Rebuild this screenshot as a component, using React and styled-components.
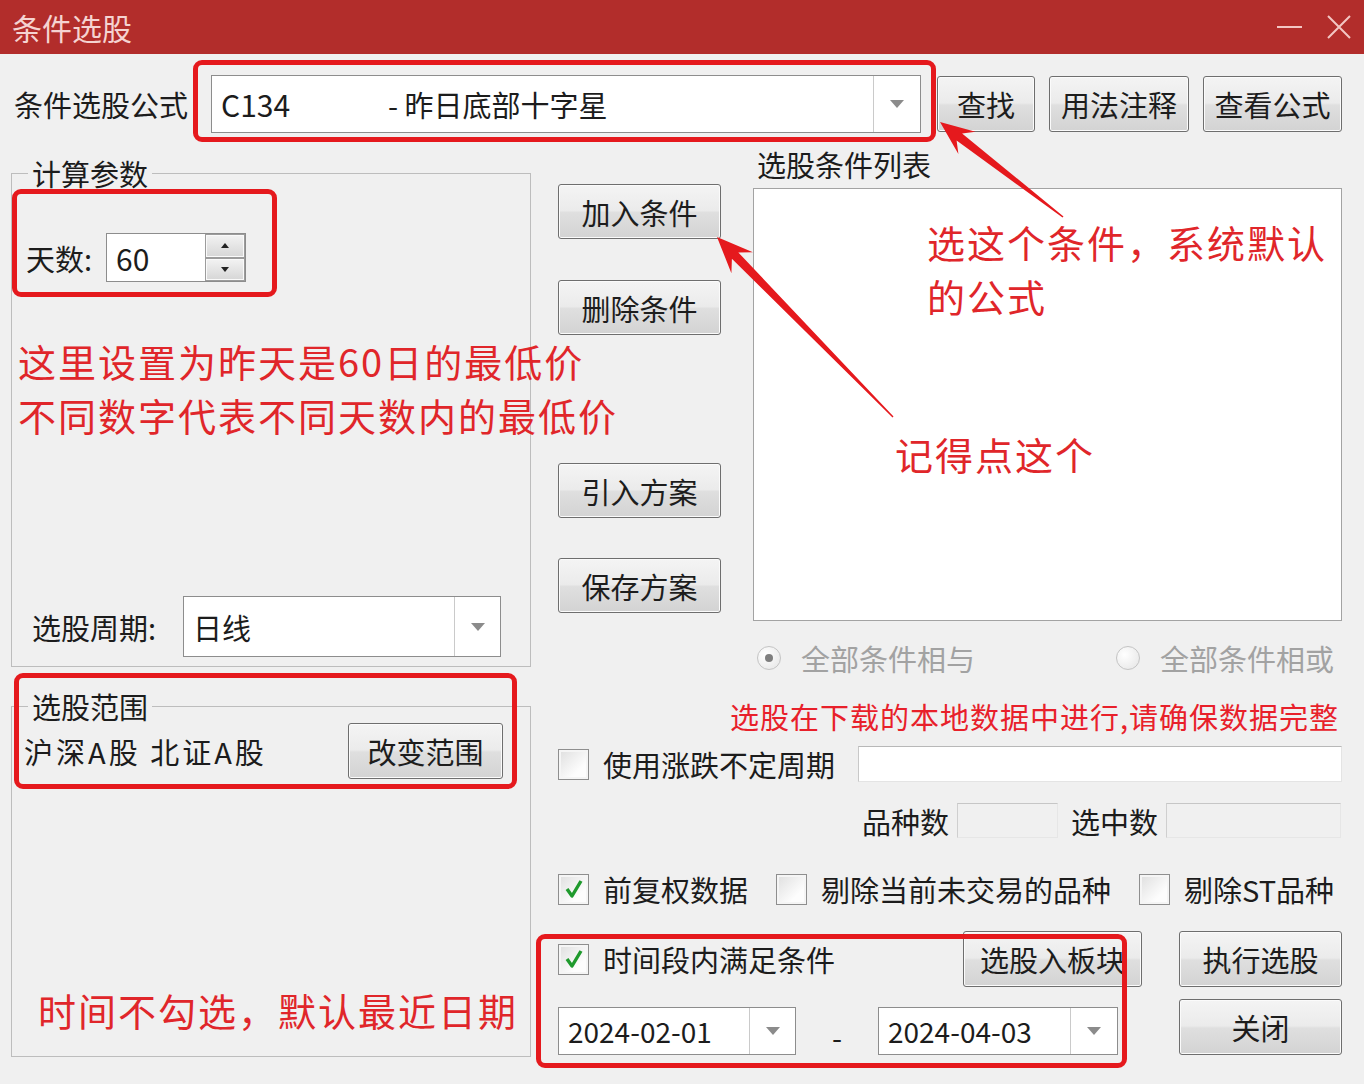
import React from "react";
import styled, { createGlobalStyle } from "styled-components";

const GlobalStyle = createGlobalStyle`
  html, body {
    margin: 0;
    padding: 0;
    background: #f0f0f0;
  }
  body {
    font-family: "Noto Sans CJK SC", "Noto Sans", sans-serif;
    color: #1c1c1c;
  }
`;

const RED = "#e5191d";
const NOTE = "#e0262a";

const Window = styled.div`
  position: relative;
  width: 1364px;
  height: 1084px;
  display: flex;
  flex-direction: column;
  background: #f0f0f0;
  overflow: hidden;
`;

const TitleBar = styled.div`
  flex: none;
  height: 54px;
  display: flex;
  align-items: center;
  padding: 0 13px 0 12px;
  background: #b22d2b;
  color: #f5d3d1;
  font-size: 30px;
  line-height: 1;
`;

const WinCtrls = styled.div`
  margin-left: auto;
  display: flex;
  align-items: center;
  gap: 25px;
`;

const Body = styled.div`
  flex: 1;
  display: flex;
  flex-direction: column;
  padding: 0 22px 0 11px;
  font-size: 29px;
  line-height: 32px;
`;

/* ---------- common controls ---------- */

const Btn = styled.div`
  box-sizing: border-box;
  flex: none;
  width: ${(p) => p.$w}px;
  height: ${(p) => p.$h || 55}px;
  margin-top: ${(p) => p.$mt || 0}px;
  display: flex;
  align-items: center;
  justify-content: center;
  border: 1px solid #6e6e6e;
  border-radius: 3px;
  background: linear-gradient(#f4f4f4, #ebebeb 48%, #dfdfdf 52%, #d3d3d3);
  box-shadow: inset 0 0 0 1px #fbfbfb;
  color: #1d1d1d;
  white-space: nowrap;
  overflow: hidden;
`;

const ComboBox = styled.div`
  box-sizing: border-box;
  flex: none;
  width: ${(p) => p.$w}px;
  height: ${(p) => p.$h}px;
  display: flex;
  border: 1px solid #8d8d8d;
  background: #fff;
`;

const ComboText = styled.div`
  flex: 1;
  display: flex;
  align-items: center;
  padding-left: ${(p) => p.$pl || 9}px;
  font-size: ${(p) => p.$fs || 29}px;
  white-space: nowrap;
  overflow: hidden;
`;

const ComboDrop = styled.div`
  width: ${(p) => p.$w}px;
  flex: none;
  display: flex;
  align-items: center;
  justify-content: center;
  border-left: 1px solid #cacaca;
`;

const Caret = styled.span`
  width: 0;
  height: 0;
  border-left: 7px solid transparent;
  border-right: 7px solid transparent;
  border-top: 8px solid #8b8b8b;
`;

const Combo = ({ w, h, dropW, fs, children }) => (
  <ComboBox $w={w} $h={h}>
    <ComboText $fs={fs}>{children}</ComboText>
    <ComboDrop $w={dropW}>
      <Caret />
    </ComboDrop>
  </ComboBox>
);

const CheckBoxBox = styled.span`
  box-sizing: border-box;
  flex: none;
  width: 31px;
  height: 31px;
  display: flex;
  align-items: center;
  justify-content: center;
  border: 1px solid #8e8e8e;
  background: linear-gradient(135deg, #dedede, #fdfdfd 70%);
  box-shadow: inset 0 0 0 2px #f5f5f5;
`;

const CheckBox = ({ checked }) => (
  <CheckBoxBox>
    {checked && (
      <svg width="20" height="22" viewBox="0 0 20 22">
        <path d="M3 11 L8 18 L17 3" fill="none" stroke="#1f9a2d" strokeWidth="3.4" strokeLinejoin="round" />
      </svg>
    )}
  </CheckBoxBox>
);

const CheckItem = styled.label`
  display: flex;
  align-items: center;
  gap: 14px;
  white-space: nowrap;
`;

const RadioDot = styled.span`
  box-sizing: border-box;
  flex: none;
  width: 24px;
  height: 24px;
  border-radius: 50%;
  border: 1px solid #c4c4c4;
  background: radial-gradient(circle at 35% 35%, #ffffff, #e4e4e4);
  display: flex;
  align-items: center;
  justify-content: center;
  &::after {
    content: "";
    width: 8px;
    height: 8px;
    border-radius: 50%;
    background: ${(p) => (p.$on ? "#7e7e7e" : "transparent")};
  }
`;

const RadioItem = styled.label`
  display: flex;
  align-items: center;
  gap: 20px;
  color: #a2a2a2;
  white-space: nowrap;
`;

/* ---------- top row ---------- */

const TopRow = styled.div`
  margin-top: 21px;
  height: 58px;
  display: flex;
  align-items: center;
`;

const TopLabel = styled.div`
  width: 199px;
  padding-left: 3px;
  white-space: nowrap;
`;

const TopBtns = styled.div`
  display: flex;
  gap: 14px;
  margin-left: 16px;
`;

const CodeSpan = styled.span`
  display: inline-block;
  width: 167px;
  font-size: 30px;
`;

/* ---------- main ---------- */

const Main = styled.div`
  flex: 1;
  display: flex;
`;

const LeftCol = styled.div`
  width: 520px;
  flex: none;
  display: flex;
  flex-direction: column;
  padding-top: 24px;
`;

const Group = styled.fieldset`
  box-sizing: border-box;
  width: 520px;
  min-width: 0;
  margin: ${(p) => p.$mt || 0}px 0 0 0;
  padding: 0 13px;
  border: 1px solid #bdbdbd;
`;

const GroupInner = styled.div`
  height: ${(p) => p.$h}px;
  display: flex;
  flex-direction: column;
`;

const Legend = styled.legend`
  margin-left: 3px;
  padding: 0 4px;
  line-height: 32px;
`;

const SpinRow = styled.div`
  margin-top: 44px;
  display: flex;
  align-items: center;
`;

const FieldLabel = styled.div`
  width: ${(p) => p.$w}px;
  padding-left: ${(p) => p.$pl || 0}px;
  flex: none;
  white-space: nowrap;
`;

const Spin = styled.div`
  box-sizing: border-box;
  width: 140px;
  height: 49px;
  display: flex;
  border: 1px solid #8d8d8d;
  background: #fff;
`;

const SpinValue = styled.div`
  flex: 1;
  display: flex;
  align-items: center;
  padding-left: 9px;
  font-size: 30px;
`;

const SpinBtns = styled.div`
  width: 40px;
  display: flex;
  flex-direction: column;
`;

const SpinHalf = styled.div`
  flex: 1;
  display: flex;
  align-items: center;
  justify-content: center;
  border: 1px solid #9c9c9c;
  background: linear-gradient(#f3f3f3, #d6d6d6);
  box-shadow: inset 0 0 0 1px #fafafa;
  &::after {
    content: "";
    border-left: 4px solid transparent;
    border-right: 4px solid transparent;
    ${(p) => (p.$up ? "border-bottom: 5px solid #222;" : "border-top: 5px solid #222;")}
  }
`;

const Note = styled.div`
  margin: ${(p) => p.$m};
  font-size: 38px;
  letter-spacing: 2px;
  line-height: 54px;
  color: ${NOTE};
  white-space: nowrap;
`;

const PeriodRow = styled.div`
  margin-top: auto;
  margin-bottom: 9px;
  display: flex;
  align-items: center;
`;

const RangeRow = styled.div`
  margin-top: 1px;
  padding-right: 14px;
  display: flex;
  align-items: center;
  justify-content: space-between;
`;

const RangeText = styled.div`
  margin-left: -1px;
  letter-spacing: 3px;
  white-space: nowrap;
`;

/* ---------- right side ---------- */

const RightArea = styled.div`
  width: 784px;
  margin-left: 27px;
  flex: none;
  display: flex;
  flex-direction: column;
`;

const RightTop = styled.div`
  display: flex;
`;

const BtnCol = styled.div`
  width: 163px;
  padding-top: 51px;
  display: flex;
  flex-direction: column;
`;

const ListCol = styled.div`
  margin-left: 32px;
  width: 589px;
  display: flex;
  flex-direction: column;
`;

const ListLabel = styled.div`
  margin-top: 15px;
  padding-left: 4px;
`;

const ListBox = styled.div`
  position: relative;
  box-sizing: border-box;
  margin-top: 8px;
  height: 433px;
  border: 1px solid #a3a3a3;
  background: #fff;
`;

const ListNote = styled(Note)`
  position: absolute;
  left: ${(p) => p.$x}px;
  top: ${(p) => p.$y}px;
  margin: 0;
`;

const RadioRow = styled.div`
  margin-top: 19px;
  height: 35px;
  padding: 0 8px 0 199px;
  display: flex;
  align-items: center;
  justify-content: space-between;
`;

const Warn = styled.div`
  margin-top: 24px;
  padding-right: 3px;
  text-align: right;
  line-height: 34px;
  letter-spacing: 1px;
  color: #e8202a;
  white-space: nowrap;
`;

const CycleRow = styled.div`
  margin-top: 13px;
  height: 36px;
  display: flex;
  align-items: center;
`;

const TextInput = styled.div`
  box-sizing: border-box;
  margin-left: auto;
  width: 484px;
  height: 36px;
  background: #fff;
  border: 1px solid #e4e4e4;
  border-top-color: #b8b8b8;
  border-left-color: #c8c8c8;
`;

const CountRow = styled.div`
  margin-top: 21px;
  height: 35px;
  padding-right: 1px;
  display: flex;
  align-items: center;
  justify-content: flex-end;
`;

const CountBox = styled.div`
  box-sizing: border-box;
  width: ${(p) => p.$w}px;
  height: 35px;
  margin: 0 ${(p) => p.$mr || 0}px 0 8px;
  background: #f0f0f0;
  border: 1px solid #e6e6e6;
  border-top-color: #c6c6c6;
  border-left-color: #cfcfcf;
`;

const OptRow = styled.div`
  margin-top: 35px;
  height: 32px;
  display: flex;
  align-items: center;
  gap: 28px;
`;

const Bottom = styled.div`
  margin-top: 26px;
  display: flex;
`;

const BottomLeft = styled.div`
  width: 584px;
  display: flex;
  flex-direction: column;
`;

const BottomRow = styled.div`
  height: 56px;
  display: flex;
  align-items: center;
  justify-content: space-between;
`;

const DateRow = styled.div`
  margin-top: 20px;
  display: flex;
  align-items: center;
`;

const Dash = styled.div`
  width: 82px;
  text-align: center;
  padding-top: 10px;
`;

const BottomRight = styled.div`
  margin-left: 37px;
  display: flex;
  flex-direction: column;
`;

/* ---------- annotation overlays ---------- */

const RedFrame = styled.div`
  position: absolute;
  left: ${(p) => p.$x}px;
  top: ${(p) => p.$y}px;
  width: ${(p) => p.$w}px;
  height: ${(p) => p.$h}px;
  box-sizing: border-box;
  border: 5px solid ${RED};
  border-radius: 9px;
  pointer-events: none;
`;

const ArrowLayer = styled.svg`
  position: absolute;
  left: 0;
  top: 0;
  pointer-events: none;
`;

const arrowPoints = (x1, y1, x2, y2, headLen, headW, neckW, tailW) => {
  const len = Math.hypot(x2 - x1, y2 - y1);
  const ux = (x2 - x1) / len;
  const uy = (y2 - y1) / len;
  const px = -uy;
  const py = ux;
  const nx = x2 - ux * headLen * 0.72;
  const ny = y2 - uy * headLen * 0.72;
  const bx = x2 - ux * headLen;
  const by = y2 - uy * headLen;
  const pts = [
    [x1 + (px * tailW) / 2, y1 + (py * tailW) / 2],
    [nx + (px * neckW) / 2, ny + (py * neckW) / 2],
    [bx + (px * headW) / 2, by + (py * headW) / 2],
    [x2, y2],
    [bx - (px * headW) / 2, by - (py * headW) / 2],
    [nx - (px * neckW) / 2, ny - (py * neckW) / 2],
    [x1 - (px * tailW) / 2, y1 - (py * tailW) / 2],
  ];
  return pts.map((p) => p.map((v) => v.toFixed(1)).join(",")).join(" ");
};

export default function App() {
  return (
    <>
      <GlobalStyle />
      <Window>
        <TitleBar>
          条件选股
          <WinCtrls>
            <svg width="25" height="4" viewBox="0 0 25 4">
              <rect x="0" y="1" width="25" height="2" fill="#f3c6c3" />
            </svg>
            <svg width="24" height="24" viewBox="0 0 24 24">
              <path d="M1 1 L23 23 M23 1 L1 23" stroke="#f3c6c3" strokeWidth="2" />
            </svg>
          </WinCtrls>
        </TitleBar>

        <Body>
          <TopRow>
            <TopLabel>条件选股公式</TopLabel>
            <Combo w={710} h={58} dropW={46}>
              <CodeSpan>C134</CodeSpan>- 昨日底部十字星
            </Combo>
            <TopBtns>
              <Btn $w={98} $h={56}>查找</Btn>
              <Btn $w={140} $h={56}>用法注释</Btn>
              <Btn $w={139} $h={56}>查看公式</Btn>
            </TopBtns>
          </TopRow>

          <Main>
            <LeftCol>
              <Group>
                <Legend>计算参数</Legend>
                <GroupInner $h={477}>
                  <SpinRow>
                    <FieldLabel $w={80} $pl={1}>天数:</FieldLabel>
                    <Spin>
                      <SpinValue>60</SpinValue>
                      <SpinBtns>
                        <SpinHalf $up />
                        <SpinHalf />
                      </SpinBtns>
                    </Spin>
                  </SpinRow>
                  <Note $m="52px 0 0 -7px">
                    这里设置为昨天是60日的最低价
                    <br />
                    不同数字代表不同天数内的最低价
                  </Note>
                  <PeriodRow>
                    <FieldLabel $w={151} $pl={7}>选股周期:</FieldLabel>
                    <Combo w={318} h={61} dropW={45}>
                      日线
                    </Combo>
                  </PeriodRow>
                </GroupInner>
              </Group>

              <Group $mt={23}>
                <Legend>选股范围</Legend>
                <GroupInner $h={334}>
                  <RangeRow>
                    <RangeText>沪深A股 北证A股</RangeText>
                    <Btn $w={155} $h={56}>改变范围</Btn>
                  </RangeRow>
                  <Note $m="auto 0 19px 13px">时间不勾选，默认最近日期</Note>
                </GroupInner>
              </Group>
            </LeftCol>

            <RightArea>
              <RightTop>
                <BtnCol>
                  <Btn $w={163}>加入条件</Btn>
                  <Btn $w={163} $mt={41}>删除条件</Btn>
                  <Btn $w={163} $mt={128}>引入方案</Btn>
                  <Btn $w={163} $mt={40}>保存方案</Btn>
                </BtnCol>
                <ListCol>
                  <ListLabel>选股条件列表</ListLabel>
                  <ListBox>
                    <ListNote $x={173} $y={26}>
                      选这个条件，系统默认
                      <br />
                      的公式
                    </ListNote>
                    <ListNote $x={141} $y={238}>记得点这个</ListNote>
                  </ListBox>
                </ListCol>
              </RightTop>

              <RadioRow>
                <RadioItem>
                  <RadioDot $on />
                  全部条件相与
                </RadioItem>
                <RadioItem>
                  <RadioDot />
                  全部条件相或
                </RadioItem>
              </RadioRow>

              <Warn>选股在下载的本地数据中进行,请确保数据完整</Warn>

              <CycleRow>
                <CheckItem>
                  <CheckBox />
                  使用涨跌不定周期
                </CheckItem>
                <TextInput />
              </CycleRow>

              <CountRow>
                品种数
                <CountBox $w={101} $mr={13} />
                选中数
                <CountBox $w={175} />
              </CountRow>

              <OptRow>
                <CheckItem>
                  <CheckBox checked />
                  前复权数据
                </CheckItem>
                <CheckItem>
                  <CheckBox />
                  剔除当前未交易的品种
                </CheckItem>
                <CheckItem>
                  <CheckBox />
                  剔除ST品种
                </CheckItem>
              </OptRow>

              <Bottom>
                <BottomLeft>
                  <BottomRow>
                    <CheckItem>
                      <CheckBox checked />
                      时间段内满足条件
                    </CheckItem>
                    <Btn $w={179} $h={56}>选股入板块</Btn>
                  </BottomRow>
                  <DateRow>
                    <Combo w={238} h={48} dropW={45} fs={28}>
                      2024-02-01
                    </Combo>
                    <Dash>-</Dash>
                    <Combo w={240} h={48} dropW={46} fs={28}>
                      2024-04-03
                    </Combo>
                  </DateRow>
                </BottomLeft>
                <BottomRight>
                  <Btn $w={163} $h={56}>执行选股</Btn>
                  <Btn $w={163} $h={56} $mt={12}>关闭</Btn>
                </BottomRight>
              </Bottom>
            </RightArea>
          </Main>
        </Body>

        <RedFrame $x={193} $y={60} $w={743} $h={82} />
        <RedFrame $x={12} $y={189} $w={265} $h={108} />
        <RedFrame $x={14} $y={673} $w={503} $h={116} />
        <RedFrame $x={536} $y={934} $w={591} $h={134} />

        <ArrowLayer width="1364" height="1084" viewBox="0 0 1364 1084">
          <polygon points={arrowPoints(1063, 217, 940, 122, 34, 28, 9, 1.5)} fill={RED} />
          <polygon points={arrowPoints(893, 417, 717, 237, 36, 30, 9, 1.5)} fill={RED} />
        </ArrowLayer>
      </Window>
    </>
  );
}
